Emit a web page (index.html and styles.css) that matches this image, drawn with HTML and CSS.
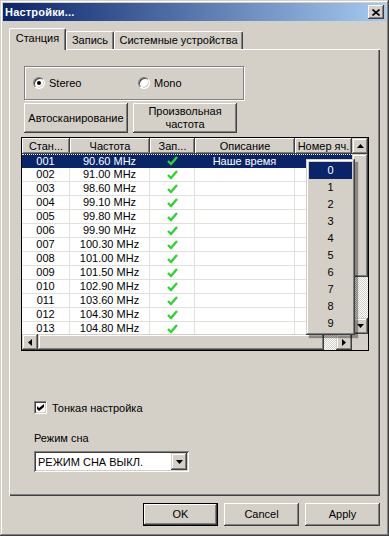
FILE: index.html
```html
<!DOCTYPE html>
<html lang="ru">

<head>
    <meta charset="UTF-8">
    <meta name="viewport" content="width=device-width, initial-scale=1.0">
    <title>Настройки...</title>
    <link rel="stylesheet" href="styles.css">
</head>

<body>
    <div class="window">
        <div class="titlebar">
            <span class="title">Настройки...</span>
            <button class="close-btn">
                <svg width="8" height="7" viewBox="0 0 8 7"><path d="M0.5 0.5l7 6M7.5 0.5l-7 6" stroke="#000" stroke-width="1.6" fill="none"/></svg>
            </button>
        </div>

        <div class="content">
            <div class="tabs">
                <div class="tab active">Станция</div>
                <div class="tab rec">Запись</div>
                <div class="tab devices">Системные устройства</div>
            </div>

            <div class="panel">
                <div class="group">
                    <label class="radio-item stereo"><span class="radio checked"></span>Stereo</label>
                    <label class="radio-item"><span class="radio"></span>Mono</label>
                </div>

                <div class="btn-row">
                    <button class="btn">Автосканирование</button>
                    <button class="btn">Произвольная<br>частота</button>
                </div>

                <div class="list">
                    <div class="view">
                        <div class="row head">
                            <div>Стан...</div>
                            <div>Частота</div>
                            <div>Зап...</div>
                            <div>Описание</div>
                            <div>Номер яч.</div>
                        </div>
                        <div class="row selected">
                            <div>001</div><div>90.60 MHz</div><div><svg class="ok" width="11" height="10" viewBox="0 0 11 10"><path d="M1 5l3 3 6-7"/></svg></div><div>Наше время</div><div></div>
                        </div>
                        <div class="row">
                            <div>002</div><div>91.00 MHz</div><div><svg class="ok" width="11" height="10" viewBox="0 0 11 10"><path d="M1 5l3 3 6-7"/></svg></div><div></div><div></div>
                        </div>
                        <div class="row">
                            <div>003</div><div>98.60 MHz</div><div><svg class="ok" width="11" height="10" viewBox="0 0 11 10"><path d="M1 5l3 3 6-7"/></svg></div><div></div><div></div>
                        </div>
                        <div class="row">
                            <div>004</div><div>99.10 MHz</div><div><svg class="ok" width="11" height="10" viewBox="0 0 11 10"><path d="M1 5l3 3 6-7"/></svg></div><div></div><div></div>
                        </div>
                        <div class="row">
                            <div>005</div><div>99.80 MHz</div><div><svg class="ok" width="11" height="10" viewBox="0 0 11 10"><path d="M1 5l3 3 6-7"/></svg></div><div></div><div></div>
                        </div>
                        <div class="row">
                            <div>006</div><div>99.90 MHz</div><div><svg class="ok" width="11" height="10" viewBox="0 0 11 10"><path d="M1 5l3 3 6-7"/></svg></div><div></div><div></div>
                        </div>
                        <div class="row">
                            <div>007</div><div>100.30 MHz</div><div><svg class="ok" width="11" height="10" viewBox="0 0 11 10"><path d="M1 5l3 3 6-7"/></svg></div><div></div><div></div>
                        </div>
                        <div class="row">
                            <div>008</div><div>101.00 MHz</div><div><svg class="ok" width="11" height="10" viewBox="0 0 11 10"><path d="M1 5l3 3 6-7"/></svg></div><div></div><div></div>
                        </div>
                        <div class="row">
                            <div>009</div><div>101.50 MHz</div><div><svg class="ok" width="11" height="10" viewBox="0 0 11 10"><path d="M1 5l3 3 6-7"/></svg></div><div></div><div></div>
                        </div>
                        <div class="row">
                            <div>010</div><div>102.90 MHz</div><div><svg class="ok" width="11" height="10" viewBox="0 0 11 10"><path d="M1 5l3 3 6-7"/></svg></div><div></div><div></div>
                        </div>
                        <div class="row">
                            <div>011</div><div>103.60 MHz</div><div><svg class="ok" width="11" height="10" viewBox="0 0 11 10"><path d="M1 5l3 3 6-7"/></svg></div><div></div><div></div>
                        </div>
                        <div class="row">
                            <div>012</div><div>104.30 MHz</div><div><svg class="ok" width="11" height="10" viewBox="0 0 11 10"><path d="M1 5l3 3 6-7"/></svg></div><div></div><div></div>
                        </div>
                        <div class="row">
                            <div>013</div><div>104.80 MHz</div><div><svg class="ok" width="11" height="10" viewBox="0 0 11 10"><path d="M1 5l3 3 6-7"/></svg></div><div></div><div></div>
                        </div>
                    </div>

                    <div class="vscroll">
                        <div class="arrow"><svg width="7" height="4" viewBox="0 0 7 4"><path d="M3.5 0L7 4H0z"/></svg></div>
                        <div class="thumb v"></div>
                        <div class="track"></div>
                        <div class="arrow"><svg width="7" height="4" viewBox="0 0 7 4"><path d="M0 0h7L3.5 4z"/></svg></div>
                    </div>
                    <div class="hscroll">
                        <div class="arrow"><svg width="4" height="7" viewBox="0 0 4 7"><path d="M0 3.5L4 0v7z"/></svg></div>
                        <div class="thumb h"></div>
                        <div class="track"></div>
                        <div class="arrow"><svg width="4" height="7" viewBox="0 0 4 7"><path d="M0 0l4 3.5L0 7z"/></svg></div>
                    </div>
                    <div class="corner"></div>

                    <!-- cell number dropdown -->
                    <div class="popup">
                        <div class="item current">0</div>
                        <div class="item">1</div>
                        <div class="item">2</div>
                        <div class="item">3</div>
                        <div class="item">4</div>
                        <div class="item">5</div>
                        <div class="item">6</div>
                        <div class="item">7</div>
                        <div class="item">8</div>
                        <div class="item">9</div>
                    </div>
                </div>

                <label class="fine">
                    <span class="checkbox"><svg width="7" height="7" viewBox="0 0 7 7"><path d="M0 2l2 2 5-4v3l-5 4-2-2z"/></svg></span>
                    Тонкая настройка
                </label>

                <div class="sleep-label">Режим сна</div>
                <div class="select">
                    <span class="select-text">РЕЖИМ СНА ВЫКЛ.</span>
                    <span class="drop"><svg width="7" height="4" viewBox="0 0 7 4"><path d="M0 0h7L3.5 4z"/></svg></span>
                </div>
            </div>

            <div class="footer">
                <button class="btn wide default">OK</button>
                <button class="btn wide">Cancel</button>
                <button class="btn wide">Apply</button>
            </div>
        </div>
    </div>
</body>

</html>
```

FILE: styles.css
```css
body {
    margin: 0;
    background-color: #d4d0c8;
    font-family: "Liberation Sans", Arial, sans-serif;
    font-size: 11px;
    color: #000;
}

.window {
    width: 389px;
    height: 536px;
    box-sizing: border-box;
    padding: 3px;
    background-color: #d4d0c8;
    box-shadow: inset -1px -1px #404040, inset 1px 1px #d4d0c8, inset -2px -2px #808080, inset 2px 2px #fff;
}

.titlebar {
    height: 18px;
    display: flex;
    align-items: center;
    justify-content: space-between;
    padding: 0 2px 0 2px;
    background: linear-gradient(to right, #0a246a, #a6caf0);
}

.title {
    color: white;
    font-weight: bold;
    font-size: 11px;
    letter-spacing: 0.2px;
}

.close-btn {
    width: 16px;
    height: 14px;
    padding: 0;
    border: none;
    background-color: #d4d0c8;
    display: flex;
    align-items: center;
    justify-content: center;
    box-shadow: inset -1px -1px #404040, inset 1px 1px #fff, inset -2px -2px #808080;
}

.content {
    padding: 7px 6px 0;
}

/* tabs */

.tabs {
    display: flex;
    align-items: flex-end;
    height: 21px;
    position: relative;
    z-index: 1;
}

.tab {
    height: 18px;
    box-sizing: border-box;
    line-height: 16px;
    text-align: center;
    background-color: #d4d0c8;
    border-top: 1px solid #fff;
    border-left: 1px solid #fff;
    border-right: 1px solid #404040;
    border-radius: 2px 2px 0 0;
    box-shadow: inset -1px 0 #808080;
}

.tab.active {
    width: 57px;
    height: 22px;
    line-height: 19px;
    margin-bottom: -1px;
}

.tab.rec {
    width: 48px;
}

.tab.devices {
    width: 129px;
}

.panel {
    height: 447px;
    box-sizing: border-box;
    padding: 17px 0 0 12px;
    box-shadow: inset 1px 1px #fff, inset -1px -1px #404040, inset -2px -2px #808080;
}

/* stereo / mono */

.group {
    width: 220px;
    height: 34px;
    box-sizing: border-box;
    margin-left: 3px;
    padding-left: 8px;
    display: flex;
    align-items: center;
    border: 1px solid #808080;
    box-shadow: inset 1px 1px #fff, 1px 1px #fff;
}

.radio-item {
    display: flex;
    align-items: center;
    gap: 4px;
}

.radio-item.stereo {
    width: 105px;
}

.radio {
    width: 12px;
    height: 12px;
    box-sizing: border-box;
    border-radius: 50%;
    background-color: #fff;
    border: 1px solid;
    border-color: #808080 #fff #fff #808080;
    box-shadow: inset 1px 1px #404040, inset -1px -1px #d4d0c8;
    display: flex;
    align-items: center;
    justify-content: center;
}

.radio.checked::after {
    content: "";
    width: 4px;
    height: 4px;
    border-radius: 50%;
    background-color: #000;
}

/* buttons */

.btn-row {
    display: flex;
    gap: 5px;
    margin: 3px 0 0 3px;
}

.btn {
    width: 104px;
    height: 30px;
    padding: 0;
    border: none;
    background-color: #d4d0c8;
    font-family: inherit;
    font-size: 11px;
    line-height: 13px;
    color: #000;
    box-shadow: inset -1px -1px #404040, inset 1px 1px #fff, inset -2px -2px #808080, inset 2px 2px #d4d0c8;
}

.btn.wide {
    width: 75px;
    height: 23px;
}

.btn.default {
    border: 1px solid #000;
}

/* station list */

.list {
    position: relative;
    margin-top: 4px;
    width: 348px;
    height: 214px;
    box-sizing: border-box;
    border: 1px solid #000;
    background-color: #fff;
    display: grid;
    grid-template-columns: 330px 16px;
    grid-template-rows: 196px 16px;
}

.view {
    overflow: hidden;
}

.row {
    display: grid;
    grid-template-columns: 48px 80px 45px 100px 57px;
    height: 14px;
    box-sizing: border-box;
    border-bottom: 1px solid #e2e0da;
}

.row > div {
    box-sizing: border-box;
    border-right: 1px solid #e2e0da;
    text-align: center;
    line-height: 13px;
    white-space: nowrap;
    overflow: hidden;
    display: flex;
    align-items: center;
    justify-content: center;
}

.row.head {
    height: 16px;
    border-bottom: none;
}

.row.head > div {
    background-color: #d4d0c8;
    border-right: none;
    box-shadow: inset -1px -1px #404040, inset 1px 1px #fff, inset -2px -2px #808080;
    line-height: 15px;
}

.row.selected {
    background-color: #0a246a;
    color: #fff;
    border-bottom-color: #0a246a;
    border-top: 1px dotted #fff;
}

.row.selected > div {
    border-right-color: #0a246a;
}

.ok path {
    fill: none;
    stroke: #2fd52f;
    stroke-width: 2.4;
}

.vscroll,
.hscroll {
    display: flex;
}

.vscroll {
    flex-direction: column;
}

.arrow {
    width: 16px;
    height: 16px;
    flex: none;
    background-color: #d4d0c8;
    display: flex;
    align-items: center;
    justify-content: center;
    box-shadow: inset -1px -1px #404040, inset 1px 1px #d4d0c8, inset -2px -2px #808080, inset 2px 2px #fff;
}

.thumb {
    background-color: #d4d0c8;
    box-shadow: inset -1px -1px #404040, inset 1px 1px #d4d0c8, inset -2px -2px #808080, inset 2px 2px #fff;
}

.thumb.v {
    height: 123px;
}

.thumb.h {
    width: 286px;
}

.track {
    flex: 1;
    background: repeating-conic-gradient(#d4d0c8 0 25%, #fff 0 50%) 0 0 / 2px 2px;
}

.corner {
    background-color: #d4d0c8;
}

.popup {
    position: absolute;
    left: 284px;
    top: 21px;
    width: 49px;
    box-sizing: border-box;
    padding: 3px;
    background-color: #d4d0c8;
    box-shadow: inset -1px -1px #404040, inset 1px 1px #d4d0c8, inset -2px -2px #808080, inset 2px 2px #fff, 3px 3px 1px rgba(0, 0, 0, 0.35);
}

.item {
    height: 17px;
    line-height: 17px;
    text-align: center;
}

.item.current {
    background-color: #0a246a;
    color: #fff;
}

/* bottom controls */

.fine {
    display: flex;
    align-items: center;
    gap: 5px;
    margin: 50px 0 0 13px;
    height: 13px;
}

.checkbox {
    width: 13px;
    height: 13px;
    box-sizing: border-box;
    background-color: #fff;
    border: 1px solid;
    border-color: #808080 #fff #fff #808080;
    box-shadow: inset 1px 1px #404040, inset -1px -1px #d4d0c8;
    display: flex;
    align-items: center;
    justify-content: center;
}

.sleep-label {
    margin: 18px 0 0 13px;
    line-height: 13px;
}

.select {
    margin: 6px 0 0 13px;
    width: 155px;
    height: 21px;
    box-sizing: border-box;
    padding: 2px;
    background-color: #fff;
    display: flex;
    align-items: center;
    justify-content: space-between;
    box-shadow: inset 1px 1px #808080, inset -1px -1px #fff, inset 2px 2px #404040, inset -2px -2px #d4d0c8;
}

.select-text {
    padding-left: 2px;
}

.drop {
    width: 16px;
    height: 17px;
    background-color: #d4d0c8;
    display: flex;
    align-items: center;
    justify-content: center;
    box-shadow: inset -1px -1px #404040, inset 1px 1px #d4d0c8, inset -2px -2px #808080, inset 2px 2px #fff;
}

.footer {
    display: flex;
    justify-content: flex-end;
    gap: 6px;
    margin-top: 7px;
}
```
